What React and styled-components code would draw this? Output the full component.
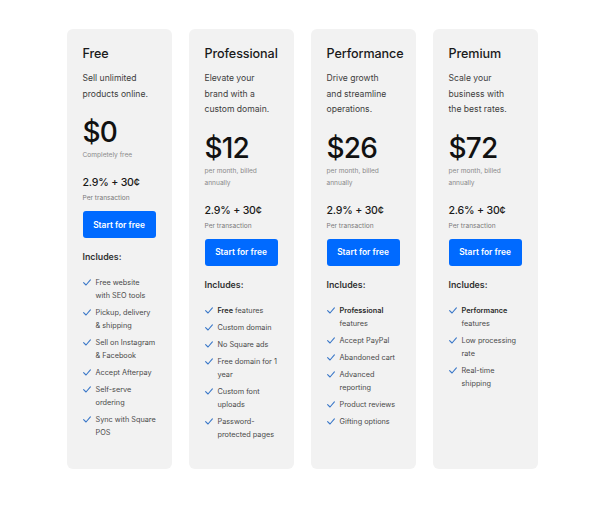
import styled, { createGlobalStyle } from "styled-components";

const GlobalStyle = createGlobalStyle`
  body {
    margin: 0;
    background: #ffffff;
    font-family: Inter, "Noto Sans", sans-serif;
    -webkit-font-smoothing: antialiased;
  }
`;

// "\n" marks where the reference breaks a feature line
const plans = [
  {
    name: "Free",
    desc: "Sell unlimited products online.",
    price: "$0",
    note: "Completely free",
    fee: "2.9% + 30¢",
    features: [
      ["", "Free website\nwith SEO tools"],
      ["", "Pickup, delivery\n& shipping"],
      ["", "Sell on Instagram\n& Facebook"],
      ["", "Accept Afterpay"],
      ["", "Self-serve\nordering"],
      ["", "Sync with Square\nPOS"],
    ],
  },
  {
    name: "Professional",
    desc: "Elevate your brand with a custom domain.",
    price: "$12",
    note: "per month, billed annually",
    fee: "2.9% + 30¢",
    features: [
      ["Free", " features"],
      ["", "Custom domain"],
      ["", "No Square ads"],
      ["", "Free domain for 1\nyear"],
      ["", "Custom font\nuploads"],
      ["", "Password-\nprotected pages"],
    ],
  },
  {
    name: "Performance",
    desc: "Drive growth and streamline operations.",
    price: "$26",
    note: "per month, billed annually",
    fee: "2.9% + 30¢",
    features: [
      ["Professional", "\nfeatures"],
      ["", "Accept PayPal"],
      ["", "Abandoned cart"],
      ["", "Advanced\nreporting"],
      ["", "Product reviews"],
      ["", "Gifting options"],
    ],
  },
  {
    name: "Premium",
    desc: "Scale your business with the best rates.",
    price: "$72",
    note: "per month, billed annually",
    fee: "2.6% + 30¢",
    features: [
      ["Performance", "\nfeatures"],
      ["", "Low processing\nrate"],
      ["", "Real-time\nshipping"],
    ],
  },
];

const Page = styled.div`
  display: flex;
  justify-content: center;
  gap: 17px;
  padding: 29px 0 0 4px;
`;

const Card = styled.div`
  width: 105px;
  height: 440px;
  box-sizing: border-box;
  padding: 16px 12px 16px 16px;
  background: #f2f2f2;
  border-radius: 6px;
  display: flex;
  flex-direction: column;
`;

const Name = styled.h2`
  margin: 0;
  font-size: 12.6px;
  line-height: 18px;
  font-weight: 500;
  color: #1a1a1a;
  letter-spacing: -0.1px;
  white-space: nowrap;
`;

const Desc = styled.p`
  margin: 8px 0 0;
  font-size: 8.6px;
  line-height: 15.5px;
  color: #3d3d3d;
  padding-right: 9px;
`;

const Price = styled.div`
  margin-top: 13px;
  font-size: 28px;
  line-height: 34px;
  font-weight: 500;
  color: #111;
  letter-spacing: -0.8px;
`;

const Note = styled.div`
  font-size: 6.6px;
  line-height: 12px;
  color: #8a8a8a;
  padding-right: 12px;
`;

const Fee = styled.div`
  margin-top: 15px;
  font-size: 10.6px;
  line-height: 14px;
  font-weight: 500;
  color: #1a1a1a;
  letter-spacing: -0.2px;
`;

const FeeNote = styled.div`
  margin-top: 2px;
  font-size: 6.6px;
  line-height: 12px;
  color: #7a7a7a;
`;

const Button = styled.button`
  margin-top: 7px;
  width: 73px;
  height: 27px;
  border: none;
  border-radius: 3px;
  background: #006aff;
  color: #fff;
  font-family: inherit;
  font-size: 8.4px;
  font-weight: 600;
  padding: 0;
  cursor: pointer;
`;

const Includes = styled.div`
  margin-top: 12px;
  font-size: 8.8px;
  line-height: 14px;
  font-weight: 600;
  color: #333;
`;

const List = styled.ul`
  list-style: none;
  margin: 12px 0 0;
  padding: 0;
  display: flex;
  flex-direction: column;
  gap: 4px;
`;

const Item = styled.li`
  display: flex;
  gap: 5px;
  font-size: 7.3px;
  line-height: 13px;
  color: #4a4a4a;
  white-space: pre-line;

  b {
    font-weight: 600;
    color: #2a2a2a;
  }
`;

const Check = styled.svg`
  flex: none;
  width: 8px;
  height: 13px;
`;

const CheckIcon = () => (
  <Check viewBox="0 0 8 13">
    <path d="M0.6 6.6 L3 9 L7.4 3.8" fill="none" stroke="#3b78c8" strokeWidth="1.1" strokeLinecap="round" strokeLinejoin="round" />
  </Check>
);

export default function App() {
  return (
    <>
      <GlobalStyle />
      <Page>
        {plans.map((p) => (
          <Card key={p.name}>
            <Name>{p.name}</Name>
            <Desc>{p.desc}</Desc>
            <Price>{p.price}</Price>
            <Note>{p.note}</Note>
            <Fee>{p.fee}</Fee>
            <FeeNote>Per transaction</FeeNote>
            <Button>Start for free</Button>
            <Includes>Includes:</Includes>
            <List>
              {p.features.map(([bold, rest]) => (
                <Item key={bold + rest}>
                  <CheckIcon />
                  <span>
                    {bold && <b>{bold}</b>}
                    {rest}
                  </span>
                </Item>
              ))}
            </List>
          </Card>
        ))}
      </Page>
    </>
  );
}
